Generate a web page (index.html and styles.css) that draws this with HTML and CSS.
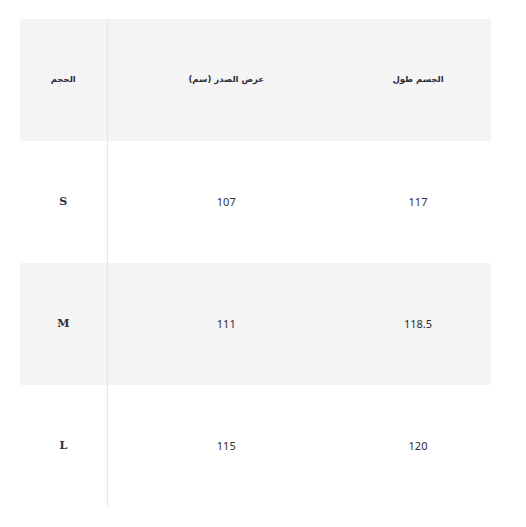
FILE: index.html
```html
<!DOCTYPE html>
<html lang="ar">
<head>
<meta charset="utf-8">
<link rel="stylesheet" href="styles.css">
</head>
<body>
<table class="size-table">
  <colgroup>
    <col class="c1"><col class="c2"><col class="c3">
  </colgroup>
  <thead>
    <tr class="row shaded">
      <th class="cell first ar">الحجم</th>
      <th class="cell ar">عرض الصدر (سم)</th>
      <th class="cell ar">الجسم طول</th>
    </tr>
  </thead>
  <tbody>
    <tr class="row">
      <td class="cell first size">S</td>
      <td class="cell num">107</td>
      <td class="cell num">117</td>
    </tr>
    <tr class="row shaded">
      <td class="cell first size">M</td>
      <td class="cell num">111</td>
      <td class="cell num">118.5</td>
    </tr>
    <tr class="row">
      <td class="cell first size">L</td>
      <td class="cell num">115</td>
      <td class="cell num">120</td>
    </tr>
  </tbody>
</table>
</body>
</html>
```
FILE: styles.css
```css
html, body {
  margin: 0;
  padding: 0;
  background: #ffffff;
}
body {
  padding: 19px 35px 0 20px;
  font-family: "Noto Sans", "DejaVu Sans", sans-serif;
  color: #2e2e38;
}
.size-table {
  border-collapse: collapse;
  table-layout: fixed;
  width: 471px;
}
.c1 { width: 87px; }
.c2 { width: 238px; }
.c3 { width: 146px; }
.row {
  height: 122px;
}
.shaded {
  background: #f4f4f4;
}
.cell {
  padding: 0 0 1px;
  text-align: center;
  vertical-align: middle;
  font-weight: normal;
}
.first {
  border-right: 1px solid #e6e6e6;
}
.ar {
  font-family: "DejaVu Sans", sans-serif;
  font-size: 8.5px;
  font-weight: bold;
  padding-bottom: 2px;
}
.num {
  font-size: 11px;
}
.size {
  font-family: "DejaVu Serif", serif;
  font-weight: bold;
  font-size: 11px;
}
```
